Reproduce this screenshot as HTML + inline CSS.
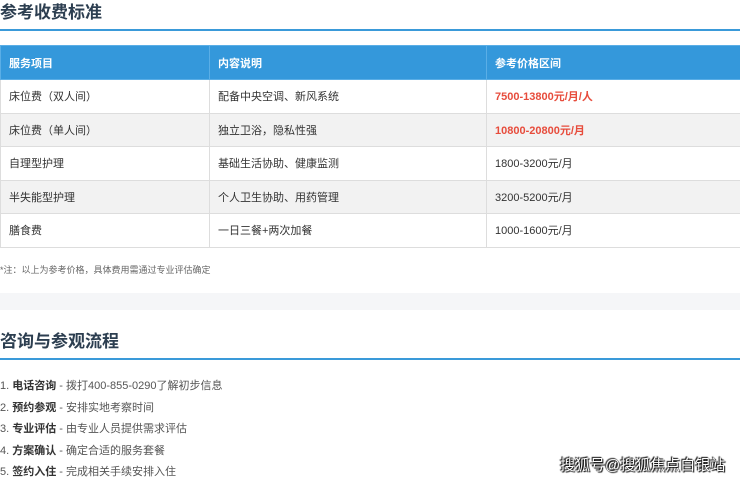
<!DOCTYPE html>
<html><head><meta charset="utf-8"><style>
*{margin:0;padding:0;box-sizing:border-box}
body{width:740px;height:480px;overflow:hidden;background:#fff;font-family:"Liberation Sans","Noto Sans CJK SC",sans-serif;color:#333;position:relative}
.t{position:absolute;left:0;font-size:17px;font-weight:bold;color:#2c3e50;line-height:22px}
.ln{position:absolute;left:0;width:740px;height:2px;background:#3a9ad9}
table{position:absolute;left:0;top:45px;width:741px;border-collapse:collapse;font-size:11px}
td,th{border:1px solid #ddd;padding:0 0 0 8px;text-align:left;height:33.5px}
th{background:#3498db;color:#fff;font-weight:bold;border-color:#5aaee6;height:34px}
tr:nth-child(odd) td{background:#f2f2f2}
.r{color:#e74c3c;font-weight:bold}
.note{position:absolute;left:0;top:263px;font-size:9px;color:#666}
.band{position:absolute;left:0;top:293px;width:740px;height:17px;background:#f5f6f8}
.li{position:absolute;left:0;font-size:11px;color:#555;line-height:14px}
.li b{color:#333}
.wm{position:absolute;left:560px;top:454px;font-size:15px;color:#fff;text-shadow:0 0 1px #000,1px 1px 1px #000,-1px -1px 1px #000}
</style></head><body>
<div class="t" style="top:2px">参考收费标准</div>
<div class="ln" style="top:29px"></div>
<table>
<tr><th style="width:209px">服务项目</th><th style="width:277px">内容说明</th><th>参考价格区间</th></tr>
<tr><td>床位费（双人间）</td><td>配备中央空调、新风系统</td><td class="r">7500-13800元/月/人</td></tr>
<tr><td>床位费（单人间）</td><td>独立卫浴，隐私性强</td><td class="r">10800-20800元/月</td></tr>
<tr><td>自理型护理</td><td>基础生活协助、健康监测</td><td>1800-3200元/月</td></tr>
<tr><td>半失能型护理</td><td>个人卫生协助、用药管理</td><td>3200-5200元/月</td></tr>
<tr><td>膳食费</td><td>一日三餐+两次加餐</td><td>1000-1600元/月</td></tr>
</table>
<div class="note">*注：以上为参考价格，具体费用需通过专业评估确定</div>
<div class="band"></div>
<div class="t" style="top:331px">咨询与参观流程</div>
<div class="ln" style="top:358px"></div>
<div class="li" style="top:379px">1. <b>电话咨询</b> - 拨打400-855-0290了解初步信息</div>
<div class="li" style="top:401px">2. <b>预约参观</b> - 安排实地考察时间</div>
<div class="li" style="top:422px">3. <b>专业评估</b> - 由专业人员提供需求评估</div>
<div class="li" style="top:444px">4. <b>方案确认</b> - 确定合适的服务套餐</div>
<div class="li" style="top:465px">5. <b>签约入住</b> - 完成相关手续安排入住</div>
<div class="wm">搜狐号@搜狐焦点白银站</div>
</body></html>
